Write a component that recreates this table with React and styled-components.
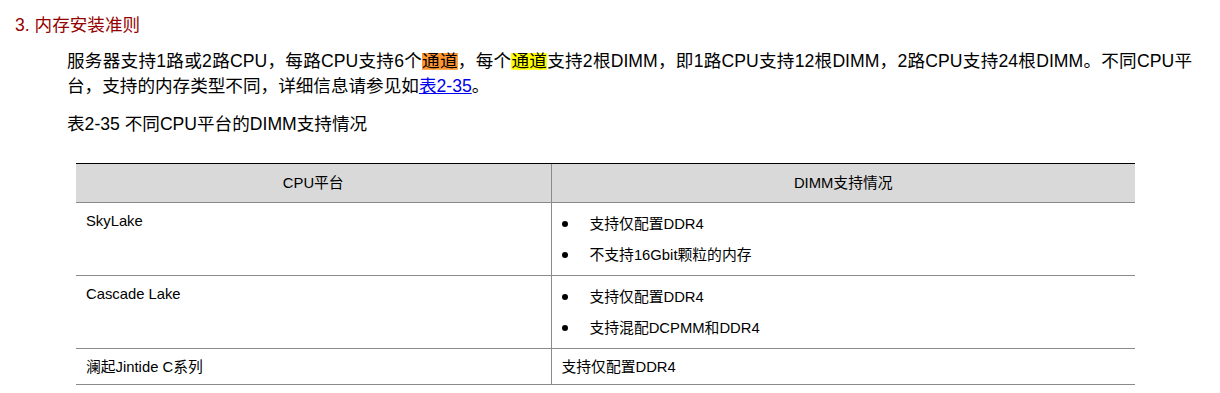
import React from 'react';
import styled, { createGlobalStyle } from "styled-components";

const rows = [
    { platform: "SkyLake", items: ["支持仅配置DDR4", "不支持16Gbit颗粒的内存"] },
    { platform: "Cascade Lake", items: ["支持仅配置DDR4", "支持混配DCPMM和DDR4"] },
    { platform: "澜起Jintide C系列", text: "支持仅配置DDR4" },
];

function App() {
    return (
        <>
            <GlobalStyle />
            <Page>
                <Heading>3. 内存安装准则</Heading>
                <Paragraph>
                    服务器支持1路或2路CPU，每路CPU支持6个<Mark $active>通道</Mark>，每个<Mark>通道</Mark>支持2根DIMM，即1路CPU支持12根DIMM，2路CPU支持24根DIMM。不同CPU平台，支持的内存类型不同，详细信息请参见如<Link href="#t2-35">表2-35</Link>。
                </Paragraph>
                <Caption>表2-35 不同CPU平台的DIMM支持情况</Caption>
                <Table>
                    <colgroup>
                        <col style={{ width: 475 }} />
                        <col />
                    </colgroup>
                    <THEAD>
                        <tr>
                            <th>CPU平台</th>
                            <th>DIMM支持情况</th>
                        </tr>
                    </THEAD>
                    <TBODY>
                        {rows.map((row) => {
                            const { platform, items, text } = row;

                            return (
                                <tr key={platform}>
                                    <td>{platform}</td>
                                    <td>
                                        {items ? (
                                            <BulletList>
                                                {items.map((item) => (
                                                    <Bullet key={item}>
                                                        <Dot />
                                                        {item}
                                                    </Bullet>
                                                ))}
                                            </BulletList>
                                        ) : text}
                                    </td>
                                </tr>
                            )
                        })}
                    </TBODY>
                </Table>
            </Page>
        </>
    )
}

const GlobalStyle = createGlobalStyle`
    body {
        margin: 0;
        background: #fff;
        color: #000;
        font-family: "Liberation Sans", "Noto Sans CJK SC", sans-serif;
    }
`

const Page = styled.div`
    width: 1220px;
    height: 393px;
    overflow: hidden;
    padding-top: 12px;
    box-sizing: border-box;
`

const Heading = styled.h3`
    margin: 0 0 0 15px;
    font-size: 17.6px;
    font-weight: normal;
    line-height: 26px;
    color: #950000;
`

const Paragraph = styled.p`
    margin: 11px 28px 0 67px;
    font-size: 17.6px;
    line-height: 25px;
    text-align: justify;
`

const Mark = styled.span`
    background: linear-gradient(${p => p.$active ? "#ff9632" : "#ffff00"}, ${p => p.$active ? "#ff9632" : "#ffff00"}) center / 100% 84% no-repeat;
`

const Link = styled.a`
    color: #0000ee;
    text-decoration: underline;
`

const Caption = styled.p`
    margin: 13px 0 0 67px;
    font-size: 17.6px;
    line-height: 25px;
`

const Table = styled.table`
    margin: 26px 0 0 76px;
    width: 1059px;
    border-collapse: collapse;
    table-layout: fixed;
    font-size: 14.8px;
    line-height: 22px;

    th, td {
        padding: 7px 10px 6px;
        text-align: left;
        vertical-align: top;
        border-bottom: 1px solid #8a8a8a;
    }

    th + th, td + td {
        border-left: 1px solid #8a8a8a;
    }
`

const THEAD = styled.thead`
    background: #d9d9d9;

    th {
        font-weight: normal;
        text-align: center;
        padding: 8px 10px;
        border-top: 1px solid #000;
    }
`

const TBODY = styled.tbody``

const BulletList = styled.ul`
    list-style: none;
    margin: 3px 0;
    padding: 0;
    display: flex;
    flex-direction: column;
    gap: 9px;
`

const Bullet = styled.li`
    display: flex;
    align-items: center;
`

const Dot = styled.span`
    width: 6px;
    height: 6px;
    border-radius: 50%;
    background: #000;
    margin-right: 22px;
    flex: none;
`

export default App;
